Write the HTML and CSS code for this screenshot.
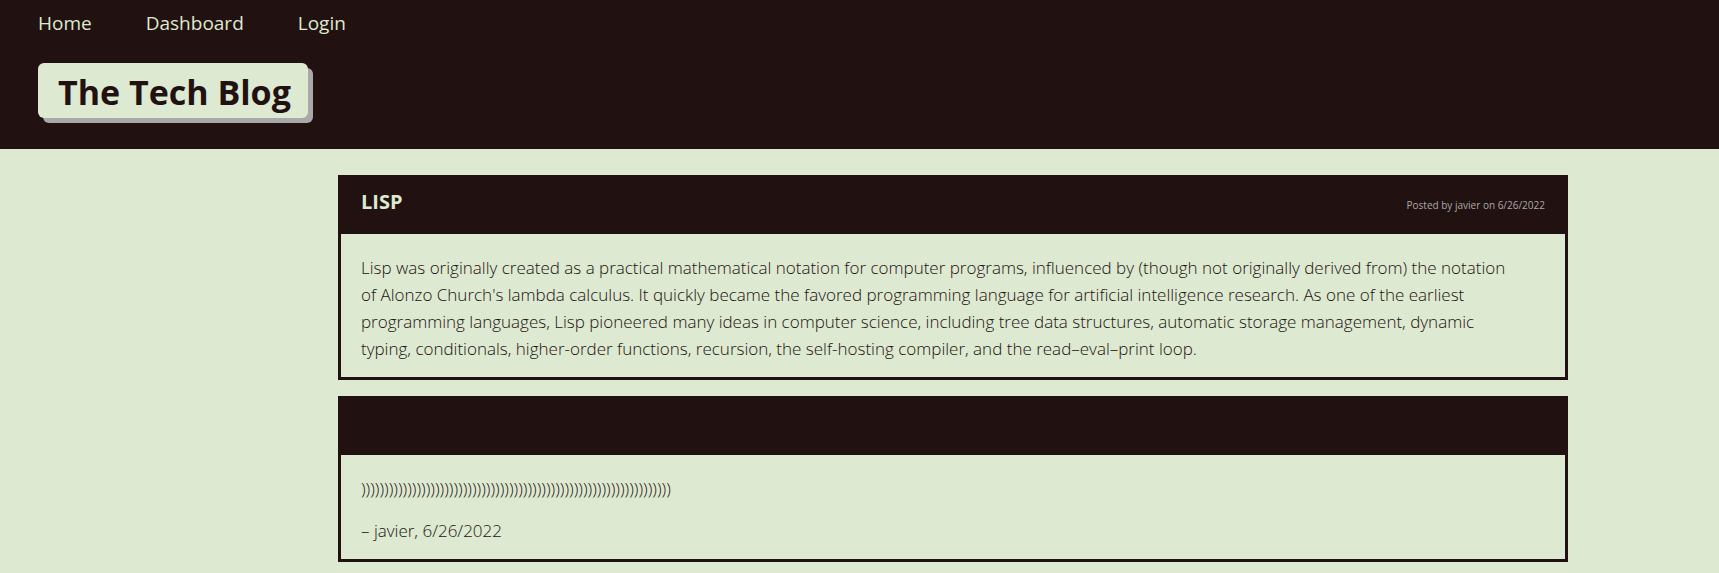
FILE: index.html
```html
<!DOCTYPE html>
<html lang="en">
<head>
<meta charset="utf-8">
<meta name="viewport" content="width=device-width, initial-scale=1">
<title>The Tech Blog</title>
<link rel="stylesheet" href="styles.css">
</head>
<body>
<header class="site-header">
  <nav class="site-nav">
    <a href="#home">Home</a>
    <a href="#dashboard">Dashboard</a>
    <a href="#login">Login</a>
  </nav>
  <h1 class="site-title">The Tech Blog</h1>
</header>
<main class="content">
  <div class="posts">
    <article class="card">
      <header class="card-header">
        <h2 class="card-title">LISP</h2>
        <p class="card-meta">Posted by javier on 6/26/2022</p>
      </header>
      <div class="card-body">
        <p>Lisp was originally created as a practical mathematical notation for computer programs, influenced by (though not originally derived from) the notation of Alonzo Church's lambda calculus. It quickly became the favored programming language for artificial intelligence research. As one of the earliest programming languages, Lisp pioneered many ideas in computer science, including tree data structures, automatic storage management, dynamic typing, conditionals, higher-order functions, recursion, the self-hosting compiler, and the read–eval–print loop.</p>
      </div>
    </article>
    <article class="card">
      <header class="card-header"></header>
      <div class="card-body">
        <p>)))))))))))))))))))))))))))))))))))))))))))))))))))))))))))))))))))</p>
        <p>– javier, 6/26/2022</p>
      </div>
    </article>
  </div>
</main>
</body>
</html>
```
FILE: styles.css
```css
:root {
  --dark: #221111;
  --light: #dde9d0;
  --muted: #a9a9a9;
}

* {
  box-sizing: border-box;
}

body {
  margin: 0;
  background: var(--light);
  color: var(--dark);
  font-family: "Segoe UI", "Open Sans", "Noto Sans", sans-serif;
  font-size: 17px;
  font-weight: 400;
  line-height: 27px;
}

h1, h2, p {
  margin: 0;
}

.site-header {
  display: flex;
  flex-direction: column;
  align-items: flex-start;
  gap: 26px;
  padding: 10px 38px 31px;
  background: var(--dark);
}

.site-nav {
  display: flex;
  gap: 54px;
}

.site-nav a {
  color: var(--light);
  font-size: 19px;
  text-decoration: none;
}

.site-title {
  padding: 6px 17px 3px 20px;
  border-radius: 6px;
  background: var(--light);
  box-shadow: 5px 5px 0 var(--muted);
  font-size: 34px;
  font-weight: 700;
  line-height: 46px;
}

.content {
  display: grid;
  grid-template-columns: 338fr 1230fr 151fr;
  padding: 26px 0 11px;
}

.posts {
  display: flex;
  flex-direction: column;
  grid-column: 2;
  gap: 16px;
  min-width: 0;
}

.card {
  border: 3px solid var(--dark);
}

.card-header {
  display: flex;
  justify-content: space-between;
  align-items: baseline;
  min-height: 56px;
  padding: 10px 20px;
  background: var(--dark);
}

.card-title {
  color: var(--light);
  font-size: 20px;
  font-weight: 700;
}

.card-meta {
  color: var(--muted);
  font-size: 10px;
}

.card-body {
  display: flex;
  flex-direction: column;
  gap: 15px;
  padding: 20px 44px 15px 20px;
  font-weight: 300;
}
```
